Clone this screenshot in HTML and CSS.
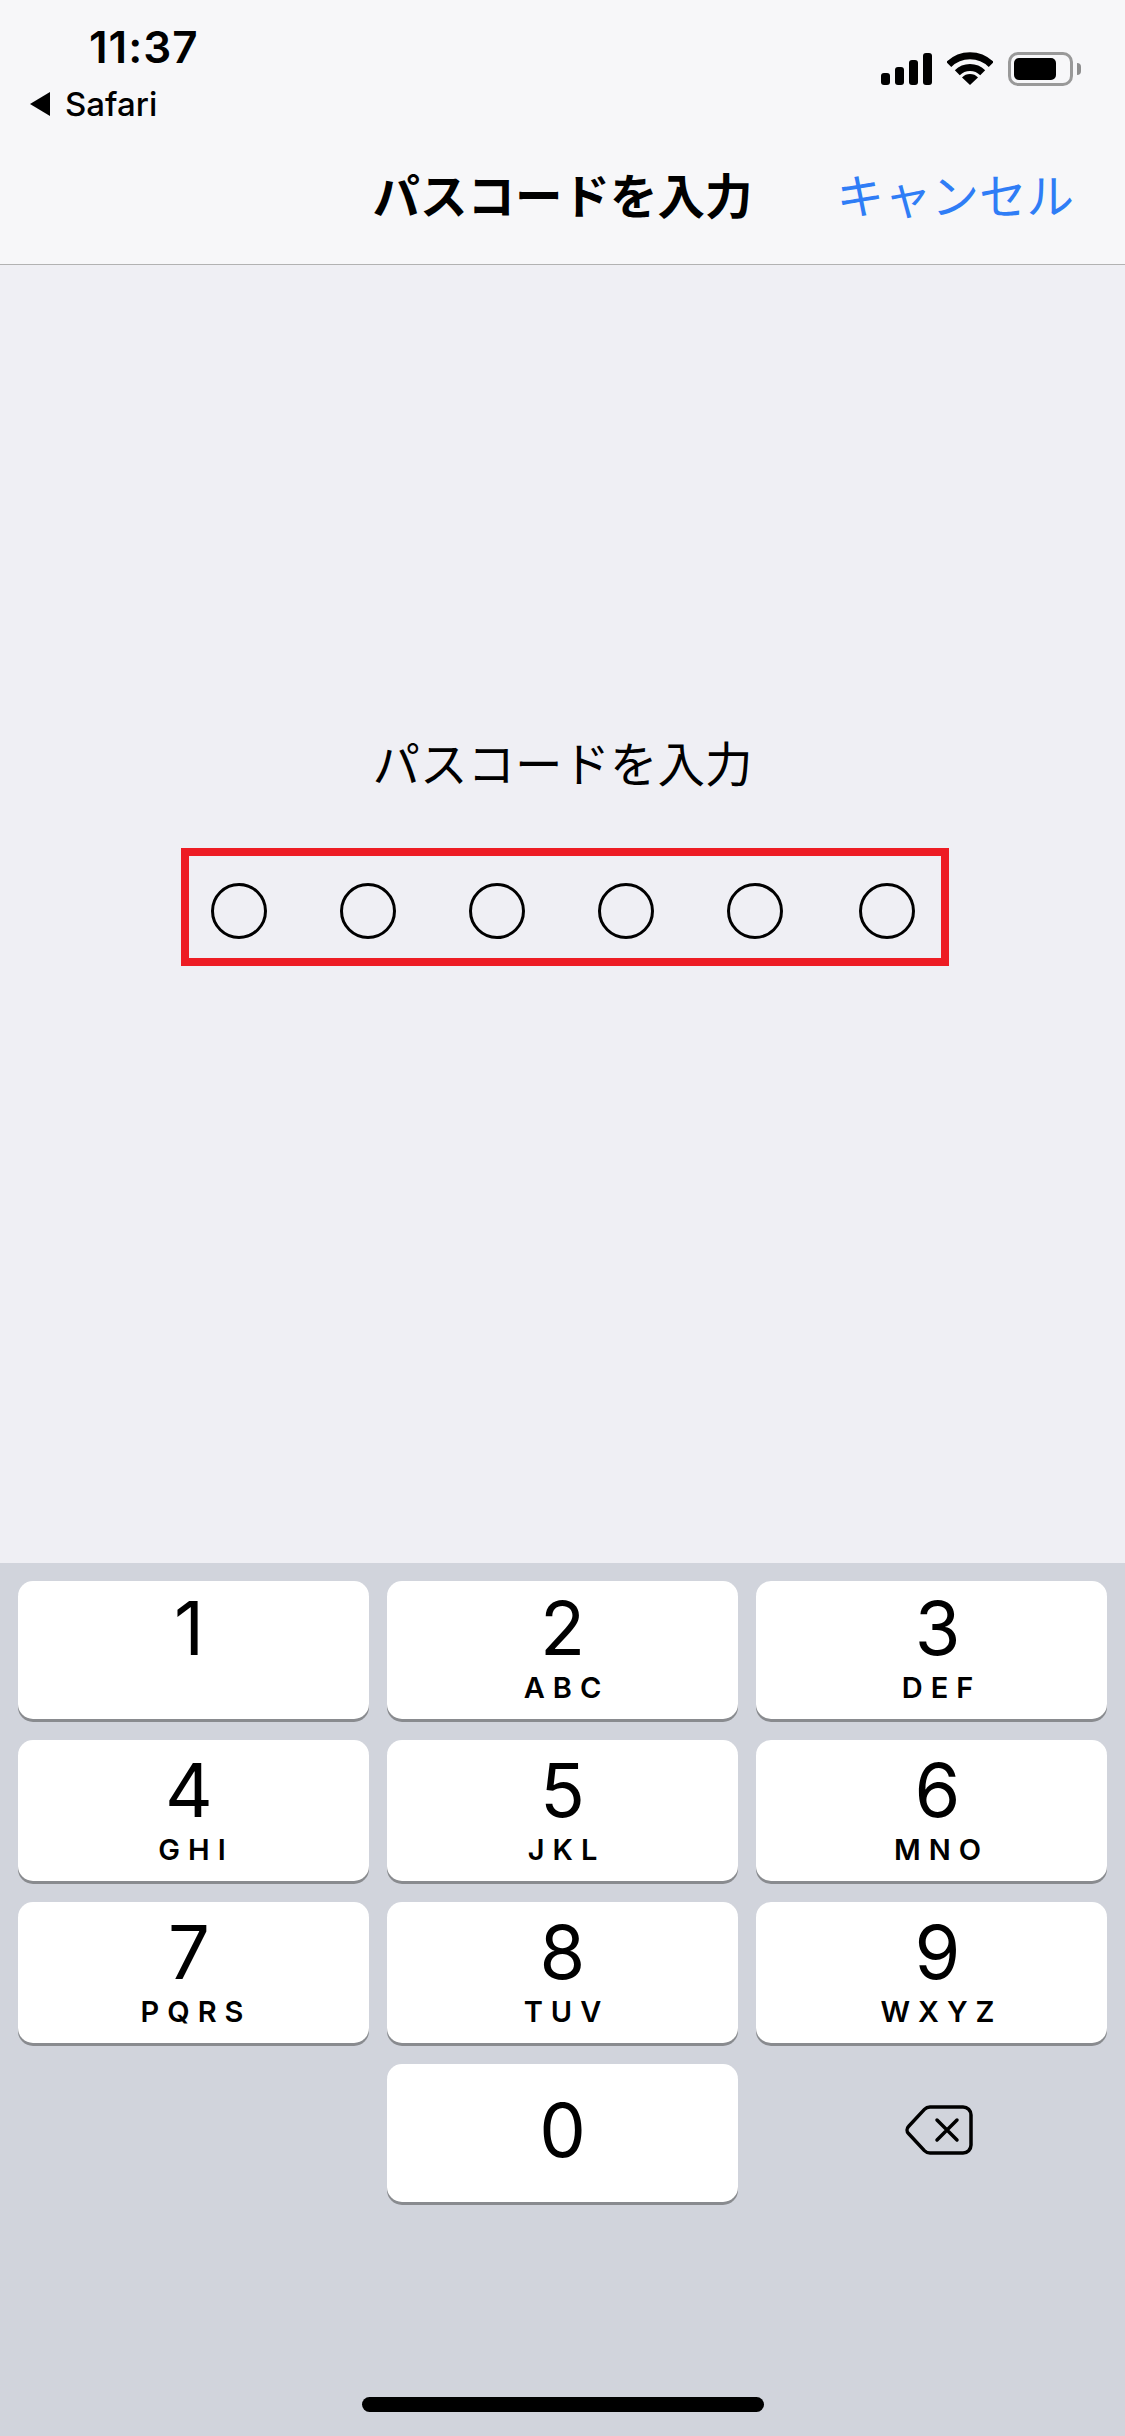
FILE: index.html
```html
<!DOCTYPE html>
<html lang="ja">
<head>
    <meta charset="UTF-8">
    <meta name="viewport" content="width=device-width, initial-scale=1.0">
    <title>パスコードを入力</title>
    <link rel="stylesheet" href="styles.css">
</head>
<body>

    <div class="page">
        <header class="header">
            <div class="status">
                <div class="status-left">
                    <div class="time">11:37</div>
                    <div class="back">
                        <span class="back-arrow"></span>
                        <span>Safari</span>
                    </div>
                </div>
                <div class="status-right">
                    <div class="signal">
                        <span class="bar bar1"></span>
                        <span class="bar bar2"></span>
                        <span class="bar bar3"></span>
                        <span class="bar bar4"></span>
                    </div>
                    <svg class="wifi" width="46" height="33" viewBox="0 0 46 33">
                        <path d="M1.8 12.5A30 30 0 0 1 44.2 12.5" fill="none" stroke="#000" stroke-width="7"/>
                        <path d="M10.3 20.8A18 18 0 0 1 35.7 20.8" fill="none" stroke="#000" stroke-width="7"/>
                        <path d="M23 33L15 25.5A11 11 0 0 1 31 25.5Z" fill="#000"/>
                    </svg>
                    <div class="battery">
                        <div class="battery-body"><span class="battery-level"></span></div>
                        <span class="battery-cap"></span>
                    </div>
                </div>
            </div>
            <div class="nav">
                <span></span>
                <h1 class="nav-title">パスコードを入力</h1>
                <a class="nav-cancel">キャンセル</a>
            </div>
        </header>

        <main class="prompt">
            <p class="prompt-label">パスコードを入力</p>
            <div class="dots">
                <span class="dot"></span>
                <span class="dot"></span>
                <span class="dot"></span>
                <span class="dot"></span>
                <span class="dot"></span>
                <span class="dot"></span>
            </div>
        </main>

        <section class="keyboard">
            <div class="keys">
                <div class="key key-left"><span class="digit">1</span><span class="letters"></span></div>
                <div class="key"><span class="digit">2</span><span class="letters">ABC</span></div>
                <div class="key key-right"><span class="digit">3</span><span class="letters">DEF</span></div>
                <div class="key key-left"><span class="digit">4</span><span class="letters">GHI</span></div>
                <div class="key"><span class="digit">5</span><span class="letters">JKL</span></div>
                <div class="key key-right"><span class="digit">6</span><span class="letters">MNO</span></div>
                <div class="key key-left"><span class="digit">7</span><span class="letters">PQRS</span></div>
                <div class="key"><span class="digit">8</span><span class="letters">TUV</span></div>
                <div class="key key-right"><span class="digit">9</span><span class="letters">WXYZ</span></div>
                <div class="key key-zero"><span class="digit">0</span></div>
                <div class="key-delete">
                    <svg width="68" height="50" viewBox="0 0 68 50" fill="none" stroke="#000" stroke-width="3.5" stroke-linecap="round">
                        <path d="M25 2H58a8 8 0 0 1 8 8v30a8 8 0 0 1-8 8H25a8 8 0 0 1-5.6-2.4L3.5 28.5a5 5 0 0 1 0-7L19.4 4.4A8 8 0 0 1 25 2z"/>
                        <path d="M32 15L52 35M52 15L32 35"/>
                    </svg>
                </div>
            </div>
            <div class="home-bar"></div>
        </section>
    </div>

</body>
</html>
```

FILE: styles.css
```css
body {
    margin: 0;
    font-family: Inter, "Noto Sans CJK JP", sans-serif;
    color: #000;
}
.page {
    width: 1125px;
    height: 2436px;
    display: flex;
    flex-direction: column;
    overflow: hidden;
}
.header {
    height: 264px;
    box-sizing: content-box;
    background-color: #f7f7f9;
    border-bottom: 1px solid #b2b2b2;
}
.status {
    height: 130px;
    display: flex;
    justify-content: space-between;
    padding: 0 44px 0 30px;
}
.status-left {
    padding-top: 21px;
}
.time {
    margin-left: 59px;
    font-size: 44px;
    line-height: 52px;
    font-weight: 600;
    letter-spacing: 1px;
}
.back {
    display: flex;
    align-items: center;
    gap: 15px;
    margin-top: 12px;
    font-size: 33px;
    line-height: 38px;
    font-weight: 500;
}
.back-arrow {
    width: 0;
    height: 0;
    border-top: 12px solid transparent;
    border-bottom: 12px solid transparent;
    border-right: 20px solid #000;
}
.status-right {
    display: flex;
    align-items: flex-start;
    padding-top: 52px;
}
.signal {
    display: flex;
    align-items: flex-end;
    gap: 5px;
    height: 33px;
}
.bar {
    width: 9px;
    background-color: #000;
    border-radius: 3px;
}
.bar1 { height: 12px; }
.bar2 { height: 18px; }
.bar3 { height: 25px; }
.bar4 { height: 32px; }
.wifi {
    margin-left: 15px;
}
.battery {
    display: flex;
    align-items: center;
    margin-left: 15px;
}
.battery-body {
    box-sizing: border-box;
    width: 65px;
    height: 34px;
    padding: 3px;
    border: 3px solid #999;
    border-radius: 10px;
}
.battery-level {
    display: block;
    width: 42px;
    height: 22px;
    background-color: #000;
    border-radius: 5px;
}
.battery-cap {
    width: 4px;
    height: 12px;
    margin-left: 4px;
    background-color: #8e8e8e;
    border-radius: 0 6px 6px 0;
}
.nav {
    height: 134px;
    display: grid;
    grid-template-columns: 1fr auto 1fr;
    align-items: center;
    padding: 0 51px;
}
.nav-title {
    margin: 0;
    font-size: 47.5px;
    line-height: 60px;
    font-weight: 700;
}
.nav-cancel {
    justify-self: end;
    font-size: 47.5px;
    line-height: 60px;
    color: #2f7df6;
}
.prompt {
    height: 1298px;
    box-sizing: border-box;
    padding: 470px 0 0 5px;
    display: flex;
    flex-direction: column;
    align-items: center;
    background-color: #efeff4;
}
.prompt-label {
    margin: 0 0 0 -5px;
    font-size: 47.5px;
    line-height: 60px;
}
.dots {
    box-sizing: border-box;
    width: 768px;
    height: 118px;
    margin-top: 53px;
    padding: 7px 22px 0;
    display: flex;
    align-items: center;
    gap: 73px;
    border: 8px solid #ed1c24;
}
.dot {
    box-sizing: border-box;
    width: 56px;
    height: 56px;
    border: 3px solid #000;
    border-radius: 50%;
}
.dot:last-child {
    margin-left: 3px;
}
.keyboard {
    flex: 1;
    box-sizing: border-box;
    padding: 18px 18px 0;
    background-color: #d1d4dc;
}
.keys {
    display: grid;
    grid-template-columns: repeat(3, 351px);
    grid-template-rows: 138px 141px 141px 138px;
    column-gap: 18px;
    row-gap: 21px;
}
.key {
    display: flex;
    flex-direction: column;
    align-items: center;
    background-color: #fff;
    border-radius: 15px;
    box-shadow: 0 3px 0 #898b8f;
}
/* the digits are not centred on the outer columns */
.key-left {
    padding-right: 3px;
}
.key-left .digit {
    margin-right: 6px;
}
.key-right {
    padding-left: 12px;
}
.digit {
    margin-top: 9px;
    font-size: 74px;
    line-height: 82px;
}
.key:nth-child(-n+3) .digit {
    margin-top: 6px;
}
.letters {
    height: 30px;
    margin-top: 4px;
    padding-left: 8px;
    font-size: 29px;
    line-height: 30px;
    font-weight: 600;
    letter-spacing: 8px;
}
.key-zero {
    grid-column: 2;
    justify-content: center;
    padding-bottom: 6px;
}
.key-zero .digit {
    margin-top: 0;
}
.key-delete {
    display: flex;
    align-items: center;
    justify-content: center;
    padding: 0 0 6px 15px;
}
.home-bar {
    width: 402px;
    height: 15px;
    margin: 195px auto 0;
    background-color: #000;
    border-radius: 8px;
}
```
